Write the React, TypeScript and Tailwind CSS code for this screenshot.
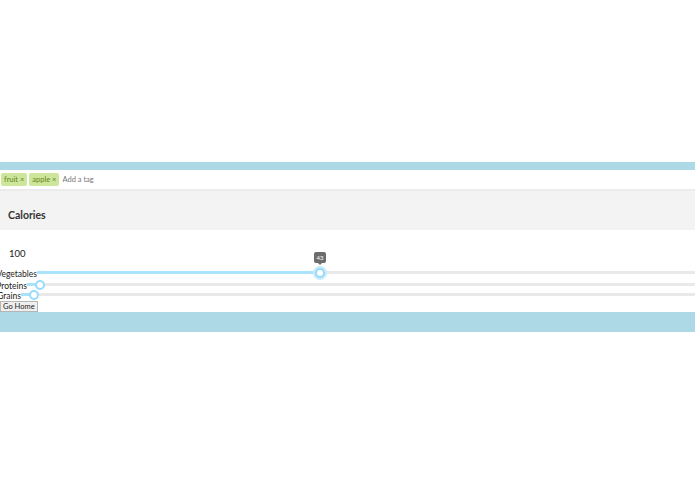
import React from 'react';

const tags = ['fruit', 'apple'];

const sliders = [
  { name: 'Vegetables', labelW: 'w-[37px]', rowH: 'h-[12px]', value: 43, focused: true },
  { name: 'Proteins', labelW: 'w-[27px]', rowH: 'h-[10px]', value: 2, focused: false },
  { name: 'Grains', labelW: 'w-[21px]', rowH: 'h-[11px]', value: 2, focused: false },
];

const Slider: React.FC<{ value: number; focused: boolean }> = ({ value, focused }) => (
  <div className="relative flex-1 h-[3px] mt-[3px] bg-[#e9e9e9]">
    <div className="absolute left-0 top-0 h-[3px] bg-[#abe2fb]" style={{ width: `${value}%` }} />
    <div
      className="absolute top-1/2 -translate-x-1/2 -translate-y-1/2"
      style={{ left: `${value}%` }}
    >
      <div
        className={`w-[10px] h-[10px] rounded-full bg-white border-2 border-[#96dbfa] ${
          focused ? 'shadow-[0_0_0_2px_#c9ecfc]' : ''
        }`}
      />
      {focused && (
        <div className="absolute left-1/2 -translate-x-1/2 bottom-[13px] flex flex-col items-center">
          <div className="bg-[#6c6c6c] text-white text-[6px] leading-[11px] px-[2px] rounded-[2px] min-w-[12px] text-center">
            {value}
          </div>
          <div className="w-0 h-0 border-l-[2px] border-r-[2px] border-t-[2px] border-l-transparent border-r-transparent border-t-[#6c6c6c]" />
        </div>
      )}
    </div>
  </div>
);

const App: React.FC = () => {
  return (
    <div className="pt-[162px] font-['Lato','Open_Sans',sans-serif] text-[#222]">
      <div className="bg-[#add8e6] pt-[8px] pb-[20px]">
        <div className="bg-white">
          <div className="h-[21px] flex items-center gap-[2px] pl-[1px] border-b-2 border-[#ececec]">
            {tags.map(tag => (
              <span
                key={tag}
                className="bg-[#cde69c] text-[#638421] text-[7.5px] leading-[13px] px-[3px] rounded-[2px]"
              >
                {tag} ×
              </span>
            ))}
            <span className="ml-[1px] text-[7.5px] text-[#777]">Add a tag</span>
          </div>
          <div className="bg-[#f3f3f3] h-[39px] pt-[18px] px-[8px]">
            <h2 className="font-bold text-[10.5px] leading-[13px] text-[#333]">Calories</h2>
          </div>
          <div className="h-[38px] pt-[19px] pl-[9px] text-[9.5px] leading-[10px]">100</div>
          {sliders.map(s => (
            <div key={s.name} className={`flex items-start ${s.rowH}`}>
              <div className={`${s.labelW} shrink-0 flex justify-end text-[8.5px] leading-[12px] whitespace-nowrap`}>
                <span>{s.name}</span>
              </div>
              <Slider value={s.value} focused={s.focused} />
            </div>
          ))}
          <div className="flex">
            <button className="bg-[#efefef] border border-[#b5b5b5] text-[7.5px] leading-[9px] px-[2px] text-[#222]">
              Go Home
            </button>
          </div>
        </div>
      </div>
    </div>
  );
};

export default App;
